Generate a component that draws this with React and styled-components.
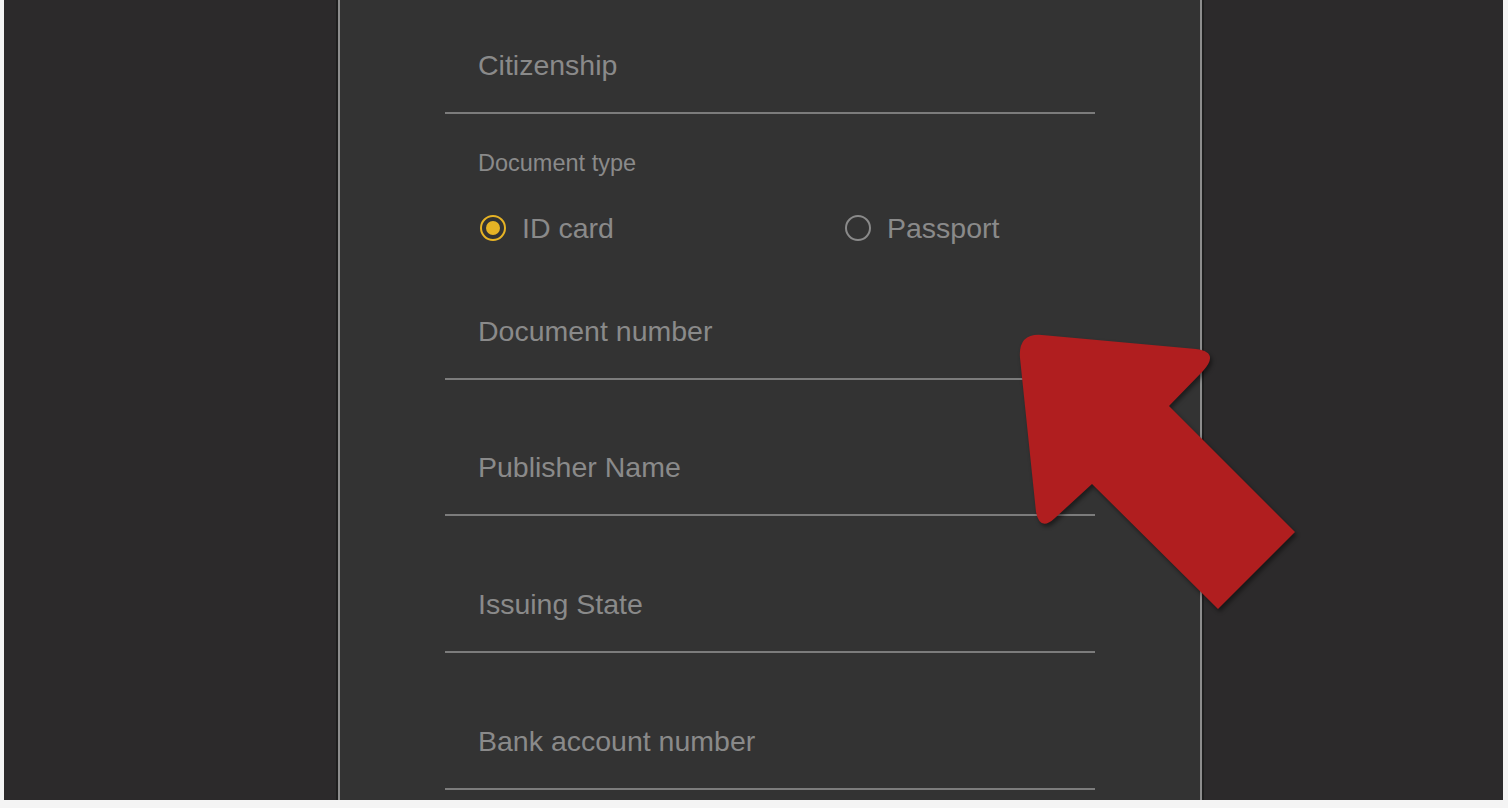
import React from 'react'
import styled, { createGlobalStyle } from 'styled-components'

const GlobalStyle = createGlobalStyle`
  html, body {
    margin: 0;
    padding: 0;
    background: #ffffff;
    font-family: 'Liberation Sans', Arial, Helvetica, sans-serif;
  }
`

const Frame = styled.div`
  position: relative;
  width: 1508px;
  height: 808px;
  padding: 0 5px 8px 4px;
  box-sizing: border-box;
  background: #f4f4f4;
`

const Backdrop = styled.div`
  height: 800px;
  background: #2c2a2b;
  overflow: hidden;
  display: flex;
`

const Panel = styled.div`
  margin-left: 334px;
  width: 864px;
  height: 100%;
  box-sizing: border-box;
  background: #333333;
  border-left: 2px solid #8d8d8d;
  border-right: 2px solid #8d8d8d;
  box-shadow: 0 0 0 2px #1e1e1e;
  padding-left: 105px;
`

const Form = styled.div`
  width: 650px;
  display: flex;
  flex-direction: column;
`

const Field = styled.div`
  padding: ${props => props.$top}px 0 30px 33px;
  border-bottom: 2px solid #7c7c7c;
  font-size: 28.5px;
  line-height: 34px;
  color: #8a8a8a;
`

const GroupLabel = styled.div`
  margin-top: 35px;
  padding-left: 33px;
  font-size: 23.5px;
  line-height: 28px;
  color: #8a8a8a;
`

const RadioRow = styled.div`
  margin-top: 31px;
  height: 40px;
  padding-left: 35px;
  display: grid;
  grid-template-columns: 365px 1fr;
  align-items: center;
`

const Option = styled.label`
  display: flex;
  align-items: center;
  gap: 16px;
  font-size: 28.5px;
  color: #8a8a8a;
`

const Radio = styled.span`
  width: 26px;
  height: 26px;
  box-sizing: border-box;
  border-radius: 50%;
  border: 2px solid ${props => (props.$checked ? '#e6b325' : '#8a8a8a')};
  display: flex;
  align-items: center;
  justify-content: center;

  &::after {
    content: '';
    width: 14px;
    height: 14px;
    border-radius: 50%;
    background: ${props => (props.$checked ? '#e6b325' : 'transparent')};
  }
`

const Arrow = styled.svg`
  position: absolute;
  left: 0;
  top: 0;
  pointer-events: none;
  filter: drop-shadow(2px 3px 2px rgba(0, 0, 0, 0.45));
`

// padding above each text field after the radio group
const fields = [
  { name: 'Document number', top: 66 },
  { name: 'Publisher Name', top: 70 },
  { name: 'Issuing State', top: 71 },
  { name: 'Bank account number', top: 71 },
]

export default function App() {
  return (
    <Frame>
      <GlobalStyle />
      <Backdrop>
        <Panel>
          <Form>
            <Field $top={48}>Citizenship</Field>
            <GroupLabel>Document type</GroupLabel>
            <RadioRow>
              <Option>
                <Radio $checked />
                ID card
              </Option>
              <Option>
                <Radio />
                Passport
              </Option>
            </RadioRow>
            {fields.map(f => (
              <Field key={f.name} $top={f.top}>
                {f.name}
              </Field>
            ))}
          </Form>
        </Panel>
      </Backdrop>
      <Arrow width="1508" height="808" viewBox="0 0 1508 808">
        <path
          d="M 1020 358 Q 1018 333 1042 335 L 1196 349 Q 1220 352 1203 371 L 1169 406 L 1295 532 L 1218 609 L 1092 484 L 1055 518 Q 1040 532 1036 512 Z"
          fill="#b01e1f"
        />
      </Arrow>
    </Frame>
  )
}
